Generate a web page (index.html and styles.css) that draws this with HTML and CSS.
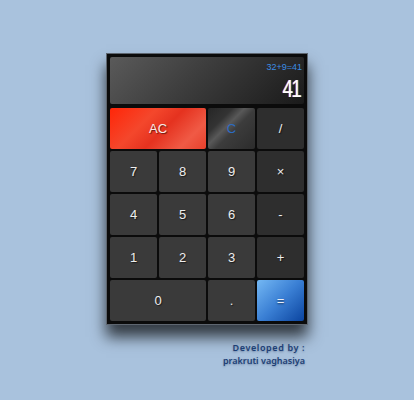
FILE: index.html
```html
<!DOCTYPE html>
<html>
<head>
<meta charset="utf-8">
<link rel="stylesheet" href="styles.css">
</head>
<body>
<div class="wrap">
  <div class="calc">
    <div class="display">
      <div class="expr">32+9=41</div>
      <div class="result">41</div>
    </div>
    <div class="keys">
      <button class="key ac wide">AC</button>
      <button class="key clear">C</button>
      <button class="key op">/</button>
      <button class="key">7</button>
      <button class="key">8</button>
      <button class="key">9</button>
      <button class="key op">×</button>
      <button class="key">4</button>
      <button class="key">5</button>
      <button class="key">6</button>
      <button class="key op">-</button>
      <button class="key">1</button>
      <button class="key">2</button>
      <button class="key">3</button>
      <button class="key op">+</button>
      <button class="key wide">0</button>
      <button class="key">.</button>
      <button class="key eq">=</button>
    </div>
  </div>
  <div class="credit">
    <div class="credit-top">Developed by :</div>
    <div>prakruti vaghasiya</div>
  </div>
</div>
</body>
</html>
```
FILE: styles.css
```css
html, body {
  margin: 0;
  padding: 0;
  background: #a9c2dd;
  height: 400px;
  overflow: hidden;
}
.wrap {
  width: 202px;
  margin: 0 auto;
  padding-top: 53px;
}
.calc {
  border: 1px solid #5e6670;
  background: #0b0b0b;
  padding: 3px;
  box-shadow: 0 12px 14px rgba(0, 0, 0, 0.7);
}
.display {
  height: 47px;
  margin-bottom: 4px;
  background: linear-gradient(135deg, #5a5a5a 0%, #3c3c3c 45%, #1a1a1a 100%);
  border-radius: 2px;
  display: flex;
  flex-direction: column;
  align-items: flex-end;
  padding-right: 2px;
  box-sizing: border-box;
  font-family: "Liberation Sans", Arial, sans-serif;
}
.expr {
  margin-top: 5px;
  font-size: 9px;
  line-height: 11px;
  color: #3b8de4;
}
.result {
  margin-top: 3px;
  font-size: 24px;
  line-height: 26px;
  color: #fff;
  letter-spacing: -2px;
  padding-right: 2px;
  transform: scaleX(0.78);
  transform-origin: right center;
  text-shadow: -1px 0 0 rgba(255, 60, 60, 0.7), 1px 0 0 rgba(60, 200, 255, 0.7);
}
.keys {
  display: grid;
  grid-template-columns: repeat(4, 1fr);
  grid-auto-rows: 41px;
  gap: 2px;
}
.key {
  border: none;
  margin: 0;
  padding: 0;
  border-radius: 2px;
  background: #3a3a3a;
  color: #eeeeee;
  font-family: "Liberation Sans", Arial, sans-serif;
  font-size: 13px;
  text-shadow: 1px 1px 1px rgba(0, 0, 0, 0.55);
}
.wide {
  grid-column: span 2;
}
.op {
  background: #2e2e2e;
}
.ac {
  background: linear-gradient(135deg, #ff2608 0%, #f4472c 35%, #e5321f 55%, #f05a45 80%, #e8402c 100%);
  color: #fbe9e6;
}
.clear {
  background: linear-gradient(135deg, #262626 0%, #333 28%, #585858 42%, #3c3c3c 55%, #2c2c2c 100%);
  color: #2c6cc4;
  text-shadow: none;
}
.eq {
  background: linear-gradient(135deg, #74b8f4 0%, #3a7fd4 50%, #0b449f 100%);
  color: #e8eef8;
  text-shadow: 0 1px 2px rgba(0, 0, 0, 0.6);
}
.credit {
  margin-top: 16px;
  padding-right: 3px;
  text-align: right;
  font-family: "Noto Sans", sans-serif;
  font-weight: 600;
  font-size: 9px;
  line-height: 13px;
  color: #1d3f75;
  text-shadow: 0 1px 2px rgba(20, 40, 80, 0.35);
}
.credit-top {
  letter-spacing: 0.6px;
}
```
